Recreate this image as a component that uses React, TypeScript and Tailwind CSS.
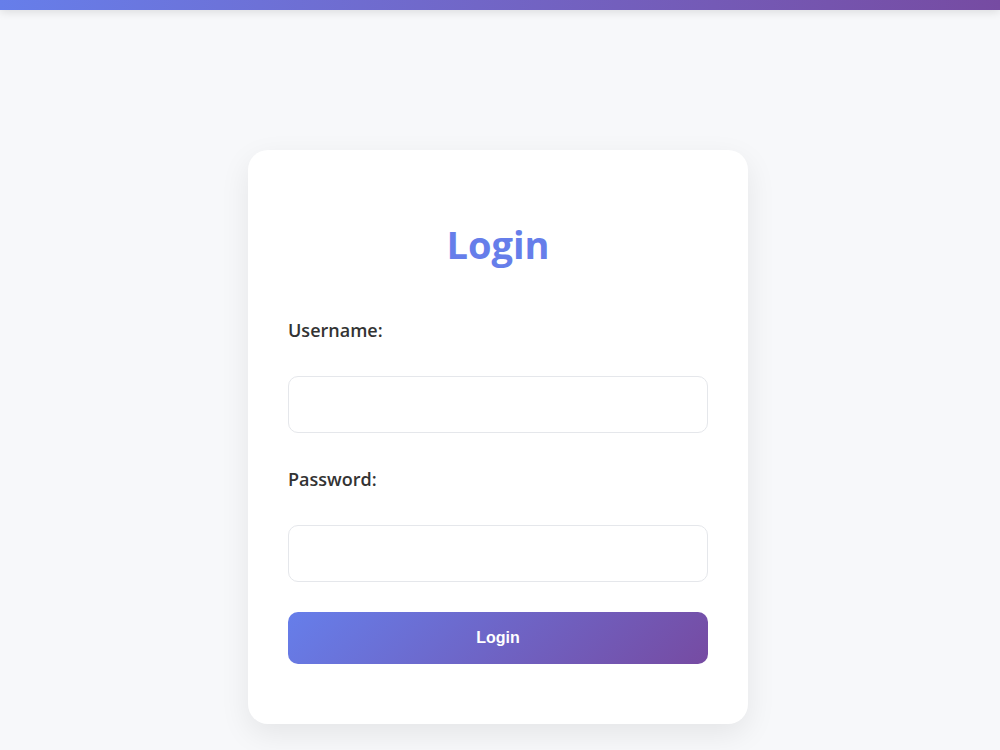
import React from "react";

export default function App() {
  return (
    <div className="min-h-[750px] w-full bg-[#f7f8fa] flex flex-col" style={{ fontFamily: "'Open Sans', Lato, sans-serif" }}>
      <div className="h-[10px] w-full bg-gradient-to-r from-[#667eea] to-[#764ba2] shadow-[0_2px_10px_rgba(0,0,0,0.12)]" />
      <div className="flex justify-center pt-[140px] pr-[4px]">
        <div className="w-[500px] bg-white rounded-[20px] shadow-[0_10px_30px_rgba(0,0,0,0.08)] px-[40px] pt-[40px] pb-[60px] flex flex-col">
          <h1 className="mt-[33px] h-[43px] leading-[43px] text-center text-[38px] font-bold text-[#667eea]">Login</h1>
          <label className="mt-[51px] h-[27px] leading-[27px] text-[18px] font-semibold text-[#333]">Username:</label>
          <input type="text" className="mt-[32px] h-[57px] w-full rounded-[10px] border border-[#e5e7eb] bg-white outline-none" />
          <label className="mt-[33px] h-[27px] leading-[27px] text-[18px] font-semibold text-[#333]">Password:</label>
          <input type="password" className="mt-[32px] h-[57px] w-full rounded-[10px] border border-[#e5e7eb] bg-white outline-none" />
          <button className="mt-[30px] h-[52px] w-full rounded-[10px] bg-[linear-gradient(135deg,#667eea_0%,#764ba2_100%)] text-white text-[16px] font-bold" style={{ fontFamily: "'Liberation Sans', Arial, sans-serif" }}>Login</button>
        </div>
      </div>
    </div>
  );
}
